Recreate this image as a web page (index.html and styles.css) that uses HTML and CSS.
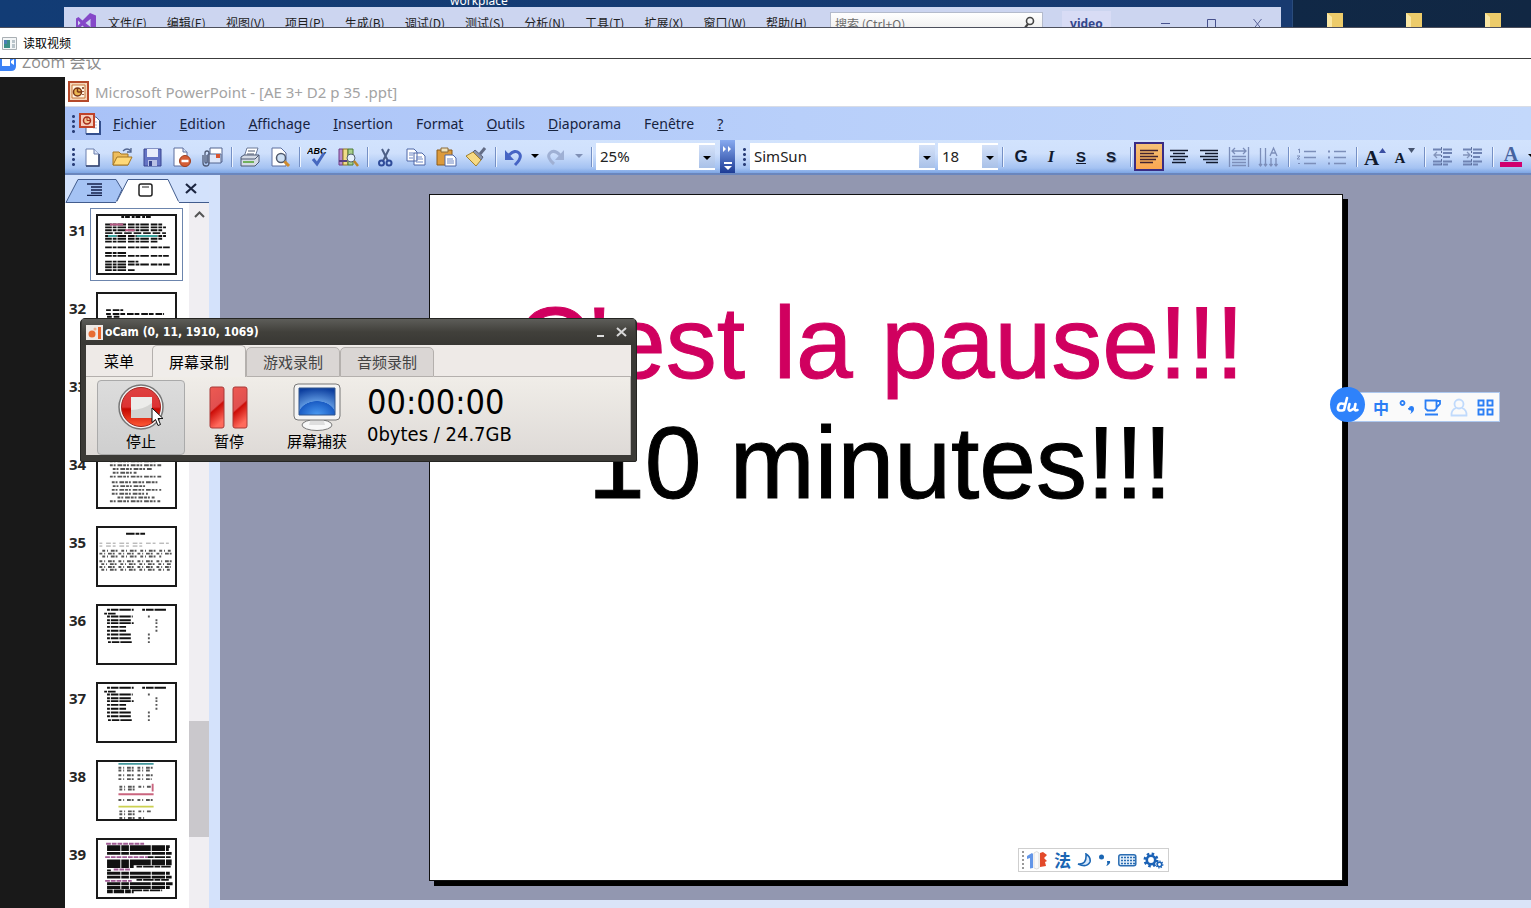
FILE: index.html
```html
<!DOCTYPE html>
<html lang="zh-CN">
<head>
<meta charset="utf-8">
<title>读取视频</title>
<link rel="stylesheet" href="styles.css">
</head>
<body>
<div class="screen">
  <header class="desktop">
    <span class="desktop-label">workplace</span>
    <div class="vs">
      <svg class="vs-logo" width="20" height="20" viewBox="0 0 20 20"><path fill="#8548c8" fill-rule="evenodd" d="M14 0l6 2.500v15L14 20 6.500 12.500 2.500 16 0 14.500v-9L2.500 4l4 3.500zM14.500 6L9.500 10l5 4zM2 7.500v5L4.500 10z"/></svg>
      <nav class="vs-menu">
        <a href="#">文件(F)</a><a href="#">编辑(E)</a><a href="#">视图(V)</a><a href="#">项目(P)</a><a href="#">生成(B)</a><a href="#">调试(D)</a><a href="#">测试(S)</a><a href="#">分析(N)</a><a href="#">工具(T)</a><a href="#">扩展(X)</a><a href="#">窗口(W)</a><a href="#">帮助(H)</a>
      </nav>
      <div class="vs-search">
        <input type="text" placeholder="搜索 (Ctrl+Q)" aria-label="搜索">
        <svg width="12" height="14" viewBox="0 0 12 14"><circle cx="7" cy="5" r="3.500" fill="none" stroke="#444" stroke-width="1.600"/><path d="M5 8L1 13" stroke="#444" stroke-width="2.200"/></svg>
      </div>
      <span class="vs-project">video</span>
      <div class="vs-controls">
        <button aria-label="最小化"><svg width="12" height="12"><path d="M1 5.500h9" stroke="#46508c"/></svg></button>
        <button aria-label="最大化"><svg width="12" height="12"><path d="M1.500 1.500h8v9h-8z" fill="none" stroke="#46508c"/></svg></button>
        <button aria-label="关闭"><svg width="12" height="12"><path d="M1.500 1l8 10M9.500 1l-8 10" stroke="#5b6499"/></svg></button>
      </div>
    </div>
    <div class="folders">
      <svg width="16" height="16"><path fill="#eccb6a" d="M0 0h16v16H0z"/><path fill="#fae7a4" d="M0 0l5 4v12H0z"/></svg>
      <svg width="16" height="16"><path fill="#eccb6a" d="M0 0h16v16H0z"/><path fill="#fae7a4" d="M0 0l5 4v12H0z"/></svg>
      <svg width="16" height="16"><path fill="#eccb6a" d="M0 0h16v16H0z"/><path fill="#fae7a4" d="M0 0l5 4v12H0z"/></svg>
    </div>
  </header>

  <div class="reader-title">
    <svg width="15" height="13" viewBox="0 0 15 13"><path fill="#f4f6f7" stroke="#a9afb3" d="M.5.5h14v12H.5z"/><path fill="#3b8f86" d="M2 3h6v8H2z"/><path fill="#4a7fb4" d="M2 3h3v4H2z"/><path fill="#b9c4ca" d="M10 3h3v3h-3zM10 7h3v4h-3z"/></svg>
    <span>读取视频</span>
  </div>

  <div class="zoom-title">
    <svg width="16" height="12" viewBox="0 0 16 12"><path fill="#3b82f6" d="M0 0h16v7q0 5-5 5H0z"/><path fill="#fff" d="M2 0h8v7H2zM11 2l3-2v6l-3-2z"/></svg>
    <span>Zoom 会议</span>
  </div>

  <main class="meeting">
    <div class="meeting-side"></div>
    <section class="ppt">
      <div class="ppt-title">
        <svg width="21" height="21" viewBox="0 0 21 21"><path fill="#f5d6b8" stroke="#b4492a" stroke-width="2" d="M1 1h19v19H1z"/><path fill="#fff4df" stroke="#c8763c" d="M4 4h13v13H4z"/><circle cx="9.500" cy="11" r="4" fill="#e9b650" stroke="#7b3518" stroke-width="1.500"/><path d="M9.500 11V7m0 4h4M15 6v2m0 2v1m0 2v1" stroke="#7b3518" stroke-width="1.500"/></svg>
        <span>Microsoft PowerPoint - [AE 3+ D2 p 35 .ppt]</span>
      </div>
      <nav class="ppt-menu">
        <span class="grip"></span>
        <svg class="doc-icon" width="25" height="22" viewBox="0 0 25 22"><path fill="#fff" stroke="#4c6395" d="M9 4h10l4 4v13H9z"/><path d="M23 8v13H9" fill="none" stroke="#344f8d" stroke-width="2"/><path d="M16 9h4m-4 3h4m-4 3h4" stroke="#a9b6d8"/><path fill="#f6cdbc" stroke="#bf432a" stroke-width="2" d="M3 1h14v13H3z"/><circle cx="10" cy="7.500" r="3.500" fill="#f3c796" stroke="#a82f1d" stroke-width="1.500"/><path d="M10 7.500V4m0 3.500h4" stroke="#a82f1d"/></svg>
        <a href="#"><u>F</u>ichier</a><a href="#"><u>E</u>dition</a><a href="#"><u>A</u>ffichage</a><a href="#"><u>I</u>nsertion</a><a href="#">Forma<u>t</u></a><a href="#"><u>O</u>utils</a><a href="#"><u>D</u>iaporama</a><a href="#">Fe<u>n</u>être</a><a href="#"><u>?</u></a>
      </nav>
      <div class="toolbar">
        <span class="grip"></span>
        <button aria-label="Nouveau"><svg width="22" height="22" viewBox="0 0 22 22"><path fill="#fff" stroke="#6b7fae" d="M5 3h8l5 5v12H5z"/><path d="M18 8v12H5" fill="none" stroke="#34446f" stroke-width="1.500"/><path d="M13 3v5h5" fill="#dbe4f8" stroke="#6b7fae"/></svg></button>
        <button aria-label="Ouvrir"><svg width="22" height="22" viewBox="0 0 22 22"><path fill="#eebd5c" stroke="#a47624" d="M2 19V6h6l2 2h7v11z"/><path fill="#ffd978" stroke="#a47624" d="M2 19l4-8h15l-4 8z"/><path d="M12 5q4-4 8 0m0-3v4h-4" fill="none" stroke="#52658f" stroke-width="1.300"/></svg></button>
        <button aria-label="Enregistrer"><svg width="22" height="22" viewBox="0 0 22 22"><path fill="#6574c4" stroke="#38458f" d="M3 3h17v17H3z"/><path fill="#e9edfb" d="M6 3h11v8H6z"/><path fill="#b9c2e6" d="M7 14h9v6H7z"/><path fill="#38458f" d="M8 15h3v5H8z"/></svg></button>
        <button aria-label="Autorisation"><svg width="22" height="22" viewBox="0 0 22 22"><path fill="#fff" stroke="#5c6f9e" d="M3 2h9l4 4v14H3z"/><path fill="#dce6fa" stroke="#5c6f9e" d="M12 2v4h4"/><circle cx="14" cy="15" r="5.500" fill="#d55e36" stroke="#a03d1c"/><path d="M10.500 15h7" stroke="#fff" stroke-width="2.500"/></svg></button>
        <button aria-label="Courrier"><svg width="22" height="22" viewBox="0 0 22 22"><path fill="#fff" stroke="#53658f" d="M9 2h12v14H9z"/><path fill="#dce6fa" stroke="#53658f" d="M7 8h13v9H7z"/><path fill="#d9542f" d="M15 8h4v4h-4z"/><path d="M2 9v8q0 3 3 3t3-3V7q0-2-2-2T4 7v9q0 1 1 1t1-1V9" fill="none" stroke="#4f5a74" stroke-width="1.300"/></svg></button>
        <span class="sep"></span>
        <button aria-label="Imprimer"><svg width="22" height="22" viewBox="0 0 22 22"><path fill="#fff" stroke="#6d7b98" d="M8 2h11l-3 9H5z"/><path fill="#d5dbe6" stroke="#4c5873" d="M2 11l3-2h15v7l-4 4H2z"/><path fill="#71b05c" d="M4 15h11v2H4z"/><path d="M9 5h7m-8 3h7M2 13h14l4-4" fill="none" stroke="#4c5873"/></svg></button>
        <button aria-label="Aperçu"><svg width="22" height="22" viewBox="0 0 22 22"><path fill="#fff" stroke="#5c6f9e" d="M3 2h9l5 5v13H3z"/><circle cx="12" cy="12" r="4.500" fill="#cfe1f5" stroke="#515a6c" stroke-width="1.500"/><path d="M15.500 15.500L20 20" stroke="#d08b2c" stroke-width="3"/></svg></button>
        <span class="sep"></span>
        <button aria-label="Orthographe"><svg width="22" height="22" viewBox="0 0 22 22"><text x="0" y="8" class="abc">ABC</text><path d="M6 13l4 5 7-11" fill="none" stroke="#4668bf" stroke-width="3"/></svg></button>
        <button aria-label="Recherche"><svg width="22" height="22" viewBox="0 0 22 22"><path fill="#b98acb" stroke="#6f3b85" d="M2 3h4v16H2z"/><path fill="#f0dc8a" stroke="#8d7625" d="M6 3h5v16H6z"/><path fill="#a9cf8d" stroke="#4c7a35" d="M11 3h5v16h-5z"/><circle cx="14" cy="12" r="4" fill="#e6f0fb" stroke="#55606e"/><path d="M17 15l4 5" stroke="#bd8524" stroke-width="2.500"/><path d="M2 15h8" stroke="#57407f" stroke-width="2"/></svg></button>
        <span class="sep"></span>
        <button aria-label="Couper"><svg width="22" height="22" viewBox="0 0 22 22"><path d="M7 3l6 12M14 3L8 15" stroke="#4c5f86" stroke-width="2"/><circle cx="6.500" cy="17" r="2.500" fill="none" stroke="#2f4c9a" stroke-width="2"/><circle cx="14" cy="17" r="2.500" fill="none" stroke="#2f4c9a" stroke-width="2"/></svg></button>
        <button aria-label="Copier"><svg width="22" height="22" viewBox="0 0 22 22"><path fill="#fff" stroke="#4e67a6" d="M2 3h7l3 3v9H2zM9 7h8l3 3v9H9z"/><path d="M4 7h5M4 9h4m-4 3h4m3-1h6m-6 2h7m-7 3h7" stroke="#6d86c4"/></svg></button>
        <button aria-label="Coller"><svg width="22" height="22" viewBox="0 0 22 22"><path fill="#dc9a3b" stroke="#8b5a18" d="M2 4h15v15H2z"/><path fill="#f1e3bb" stroke="#8b6a38" d="M6 2h7v4H6z"/><path fill="#fff" stroke="#4e67a6" d="M10 9h8l3 3v8H10z"/><path d="M12 13h6m-6 2h7m-7 2h7" stroke="#6d86c4"/></svg></button>
        <button aria-label="Reproduire"><svg width="22" height="22" viewBox="0 0 22 22"><path d="M20 2l-5 6" stroke="#626b84" stroke-width="3"/><path fill="#8b93a8" stroke="#59617a" d="M10 4l8 7-2 3-8-8z"/><path fill="#f6d983" stroke="#a1802e" d="M8 6l8 8-5 6L1 10z"/></svg></button>
        <span class="sep"></span>
        <button aria-label="Annuler"><svg width="22" height="22" viewBox="0 0 22 22"><path d="M6 9q6-6 10-2t-4 12" fill="none" stroke="#4664c4" stroke-width="3"/><path fill="#4664c4" d="M2 4v10h9z"/></svg></button>
        <button class="narrow" aria-label="Liste annuler"><svg width="8" height="5"><path d="M0 0h8L4 4z"/></svg></button>
        <button aria-label="Rétablir"><svg width="22" height="22" viewBox="0 0 22 22"><path d="M15 9Q9 3 5 7t4 11" fill="none" stroke="#9fb0d4" stroke-width="3"/><path fill="#9fb0d4" d="M19 4v10h-9z"/></svg></button>
        <button class="medium" aria-label="Liste rétablir"><svg width="8" height="5"><path fill="#8090b5" d="M0 0h8L4 4z"/></svg></button>
        <span class="sep"></span>
        <label class="combo combo-zoom"><select aria-label="Zoom"><option>25%</option></select><i></i></label>
        <button class="overflow" aria-label="Options"><svg width="15" height="31" viewBox="0 0 15 31"><path fill="#fff" d="M3 5l3 3-3 3zM8 5l3 3-3 3zM4 21h8v2H4zM4 25h8l-4 4z"/></svg></button>
        <span class="grip"></span>
        <label class="combo combo-font"><select aria-label="Police"><option>SimSun</option></select><i></i></label>
        <label class="combo combo-size"><select aria-label="Taille"><option>18</option></select><i></i></label>
        <span class="sep"></span>
        <button class="glyph">G</button>
        <button class="glyph italic">I</button>
        <button class="glyph under">S</button>
        <button class="glyph shade">S</button>
        <span class="sep"></span>
        <button class="active" aria-label="Aligner à gauche"><svg width="20" height="16"><path d="M1 1.500h18M1 4.500h14M1 7.500h18M1 10.500h16M1 13.500h13" stroke="#432330" stroke-width="1.500"/></svg></button>
        <button aria-label="Centrer"><svg width="20" height="16"><path d="M1 1.500h18M4 4.500h12M1 7.500h18M4 10.500h12M3 13.500h14" stroke="#111a2e" stroke-width="1.500"/></svg></button>
        <button aria-label="Aligner à droite"><svg width="20" height="16"><path d="M1 1.500h18M6 4.500h13M1 7.500h18M4 10.500h15M7 13.500h12" stroke="#111a2e" stroke-width="1.500"/></svg></button>
        <button aria-label="Distribuer"><svg width="22" height="22"><path d="M1.500 1v20M20.500 1v20M4 5h14M7 2L4 5l3 3M15 2l3 3-3 3M4 10.500h14M4 13.500h14M4 16.500h14M4 19.500h14" fill="none" stroke="#7c8eb9" stroke-width="1.300"/></svg></button>
        <button aria-label="Orientation"><svg width="22" height="22"><path d="M2.500 2v18M7.500 2v18M13 12v8M18 12v8M1 18l1.500 2L4 18M6 18l1.500 2L9 18M11.500 18l1.500 2 1.500-2M16.500 18l1.500 2 1.500-2M12 10l3.500-8L19 10M13 7h5" fill="none" stroke="#7c8eb9" stroke-width="1.300"/></svg></button>
        <span class="sep"></span>
        <button aria-label="Numérotation"><svg width="22" height="20"><path d="M8 4.500h12M8 10.500h12M8 16.500h12" stroke="#7c8eb9" stroke-width="1.500"/><path d="M2 3l1.500-1v4M1 9h3l-3 3h3M2 16.500h2" fill="none" stroke="#7c8eb9"/></svg></button>
        <button aria-label="Puces"><svg width="22" height="20"><path d="M8 4.500h12M8 10.500h12M8 16.500h12" stroke="#7c8eb9" stroke-width="1.500"/><path d="M2 3.500h2v2H2zM2 9.500h2v2H2zM2 15.500h2v2H2z" fill="#7c8eb9"/></svg></button>
        <span class="sep"></span>
        <button class="grow" aria-label="Augmenter">A<svg width="7" height="5"><path fill="#3b4fa2" d="M0 5h7L3.500 0z"/></svg></button>
        <button class="grow small" aria-label="Réduire">A<svg width="7" height="5"><path fill="#46546f" d="M0 0h7L3.500 5z"/></svg></button>
        <span class="sep"></span>
        <button aria-label="Diminuer le retrait"><svg width="22" height="20"><path d="M1 2.500h20M11 6h10M11 10h7M1 14.500h20M1 17.500h15" stroke="#6f83b3" stroke-width="2" stroke-dasharray="9 1"/><path d="M9 8H2m3-3L2 8l3 3" fill="none" stroke="#8394bb" stroke-width="1.300"/><path d="M9.500 0v20" stroke="#5c6e9b" stroke-dasharray="2 2"/></svg></button>
        <button aria-label="Augmenter le retrait"><svg width="22" height="20"><path d="M1 2.500h20M11 6h10M11 10h7M1 14.500h20M1 17.500h15" stroke="#6f83b3" stroke-width="2" stroke-dasharray="9 1"/><path d="M1 8h7M5 5l3 3-3 3" fill="none" stroke="#8394bb" stroke-width="1.300"/><path d="M9.500 0v20" stroke="#5c6e9b" stroke-dasharray="2 2"/></svg></button>
        <span class="sep"></span>
        <button class="font-color" aria-label="Couleur de police">A</button>
        <button class="narrow" aria-label="Liste couleurs"><svg width="8" height="5"><path d="M0 0h8L4 4z"/></svg></button>
      </div>

      <div class="work">
        <aside class="outline">
          <div class="tabs">
            <svg class="tab-shapes" width="144" height="28" viewBox="0 0 144 28"><path fill="#d3e2fc" d="M0 0h144v28H0z"/><path fill="#a5c3f4" stroke="#425c8d" d="M1 27.500L13 4.500h38l6 10-6 13z"/><path fill="#fff" stroke="#425c8d" d="M51 28L63 4.500h40L114 27.500h30"/><path d="M51 27.500h63" stroke="#fff" stroke-width="2"/></svg>
            <button class="tab-plan" aria-label="Plan"><svg width="16" height="13"><path d="M0 1h15M4 4h11M4 7h11M4 10h11M0 12.500h15" stroke="#15204a" stroke-width="1.500"/></svg></button>
            <button class="tab-slides" aria-label="Diapositives"><svg width="15" height="14"><rect x="1" y="1" width="13" height="12" rx="2" fill="none" stroke="#222" stroke-width="1.500"/><path d="M4 4h7" stroke="#222"/></svg></button>
            <button class="tab-close" aria-label="Fermer"><svg width="12" height="11"><path d="M1 1l10 9M11 1L1 10" stroke="#1c2641" stroke-width="2.200"/></svg></button>
          </div>
          <div class="slides">
            <ol class="thumbs">
              <li class="current"><b>31</b><svg viewBox="0 0 80 60"><path class="k" d="M24 1h32" stroke-dasharray="3 1 5 2"/><path class="k" d="M7 9h60M7 12h64M7 15h60M7 21h64M7 24h60M7 27h56M7 33h68M7 39h22M7 42h67M7 48h35M7 51h68M7 54h24M7 57h32" stroke-dasharray="7 1 4 1 9 2"/><path d="M12 9h14M28 15h10M50 54" stroke="#b65783" stroke-width="2"/><path d="M7 18h64" stroke="#222" stroke-width="2" stroke-dasharray="8 2"/><path d="M40 21h22M10 21h9" stroke="#3ea5a0" stroke-width="2"/></svg></li>
              <li><b>32</b><svg viewBox="0 0 80 60"><path class="k" d="M8 17h18M8 21h61M9 24h13" stroke-dasharray="5 2 7 1"/></svg></li>
              <li><b>33</b><svg viewBox="0 0 80 60"><path class="g" d="M10 15h50M10 25h54"/></svg></li>
              <li><b>34</b><svg viewBox="0 0 80 60"><path class="g" d="M12 12h50M12 16h54M15 20h42M15 24h25M12 28h54M14 34h50M15 38h34M14 42h52M14 46h38M20 50h39M12 54h53"/></svg></li>
              <li><b>35</b><svg viewBox="0 0 80 60"><path class="k" d="M29 6h20" stroke-dasharray="9 1 4 1"/><path class="l" d="M1 16h76M1 19h45"/><path class="g sparse" d="M4 24h72M1 27h78M4 30h62M1 35h78M3 38h74M1 41h75M3 44h72"/></svg></li>
              <li><b>36</b><svg viewBox="0 0 80 60"><path class="k" d="M9 4h28M46 4h25M6 8h12M9 11h27M9 15h25M9 18h28M9 22h20M9 26h20M9 30h25M9 34h25M10 38h26" stroke-dasharray="3 1 8 1 12 1"/><path class="g" d="M52 11h2M60 15h2M60 18h2M60 22h2M60 26h2M52 30h2M52 34h2M52 38h2"/></svg></li>
              <li><b>37</b><svg viewBox="0 0 80 60"><path class="k" d="M9 4h28M46 4h25M6 8h12M9 11h27M9 15h25M9 18h28M9 22h20M9 26h20M9 30h25M9 34h25M10 38h26" stroke-dasharray="3 1 8 1 12 1"/><path class="g" d="M52 11h2M60 15h2M60 18h2M60 22h2M60 26h2M52 30h2M52 34h2M52 38h2"/></svg></li>
              <li><b>38</b><svg viewBox="0 0 80 60"><path d="M21 2h37" stroke="#43989d" stroke-width="2"/><path class="g sparse" d="M21 6h36M21 9h34M21 14h36M21 18h35M22 26h34M22 29h20M21 40h36M22 52h34M22 55h16M22 59h26"/><path d="M21 34h37M57 23v8" stroke="#ca657f" stroke-width="2"/><path d="M21 47h37" stroke="#cbd04f" stroke-width="2"/></svg></li>
              <li><b>39</b><svg viewBox="0 0 80 60"><path d="M8 4h40M7 18h45M16 31h17M7 43h28" stroke="#a05b94" stroke-width="2" stroke-dasharray="5 1"/><path class="k w" d="M9 7h66M9 10h65M9 14h68M9 22h68M9 25h68M9 28h28M9 35h66M9 39h68M9 46h69M9 50h66"/><path class="k" d="M52 18h24M9 32h4M40 28h36M40 42h34M9 53h58M9 55h28" stroke-dasharray="6 1 11 1"/></svg></li>
            </ol>
            <div class="scroll">
              <svg width="11" height="7"><path d="M1 6l4.500-4.500L10 6" fill="none" stroke="#555" stroke-width="2"/></svg>
              <div class="scroll-thumb"></div>
            </div>
          </div>
        </aside>
        <div class="splitter"></div>
        <div class="stage">
          <article class="slide">
            <h1>C'est la pause!!!</h1>
            <p>10 minutes!!!</p>
          </article>
        </div>
      </div>
    </section>
  </main>

  <section class="ocam" aria-label="oCam">
    <div class="ocam-title">
      <svg width="17" height="15" viewBox="0 0 17 15"><path fill="#eee8e4" d="M0 0h17v15H0z"/><circle cx="6" cy="9" r="3.500" fill="#e76c33"/><circle cx="9" cy="4" r="1.500" fill="#e9ad8c"/><path fill="#e9642a" d="M12 2h3v12h-3z"/></svg>
      <span>oCam (0, 11, 1910, 1069)</span>
      <button aria-label="最小化"><svg width="10" height="12"><path d="M1 10h7" stroke="#ddd" stroke-width="2"/></svg></button>
      <button aria-label="关闭"><svg width="11" height="12"><path d="M1 2l9 8M10 2l-9 8" stroke="#d8d8d8" stroke-width="2"/></svg></button>
    </div>
    <div class="ocam-body">
      <div class="ocam-tabs">
        <button class="menu">菜单</button><button class="on">屏幕录制</button><button>游戏录制</button><button>音频录制</button><span></span>
      </div>
      <div class="ocam-tools">
        <button class="pressed"><svg width="48" height="48" viewBox="0 0 48 48"><defs><linearGradient id="red" x2="0" y2="1"><stop offset="0" stop-color="#de4141"/><stop offset=".5" stop-color="#d33"/><stop offset=".55" stop-color="#c60800"/><stop offset="1" stop-color="#ff5a35"/></linearGradient><linearGradient id="bar" x2=".3" y2="1"><stop offset="0" stop-color="#ee5a52"/><stop offset=".55" stop-color="#e05050"/><stop offset=".6" stop-color="#cc0d08"/><stop offset="1" stop-color="#ff6a5c"/></linearGradient><radialGradient id="blue" cx=".5" cy="1" r="1"><stop offset="0" stop-color="#4b9bf2"/><stop offset=".5" stop-color="#1a5cc4"/><stop offset=".52" stop-color="#5c95de"/><stop offset="1" stop-color="#0d3f9f"/></radialGradient></defs><circle cx="24" cy="24" r="22" fill="#f5f5f5" stroke="#777" stroke-width="1.500"/><circle cx="24" cy="24" r="19.500" fill="url(#red)" stroke="#a42620"/><path fill="#ececea" d="M14 14h21v21H14z"/><path fill="#c9c9c6" d="M14 27q12 0 21-7v15H14z" opacity=".7"/></svg>停止</button>
        <button><svg width="48" height="48" viewBox="0 0 48 48"><rect x="5" y="4" width="14" height="41" rx="2" fill="url(#bar)" stroke="#a83a38"/><rect x="28" y="4" width="14" height="41" rx="2" fill="url(#bar)" stroke="#a83a38"/></svg>暂停</button>
        <button><svg width="48" height="48" viewBox="0 0 48 48"><ellipse cx="24" cy="42" rx="15" ry="5.500" fill="#f8f8f8" stroke="#777"/><path fill="#dedede" d="M18 34h12l2 8H16z"/><rect x="1" y="1" width="46" height="36" rx="4" fill="#f4f4f4" stroke="#777"/><path fill="url(#blue)" stroke="#31558c" d="M6 5h36v27H6z"/></svg>屏幕捕获</button>
        <div class="ocam-status"><strong>00:00:00</strong><span>0bytes / 24.7GB</span></div>
      </div>
    </div>
    <svg class="cursor" width="13" height="20" viewBox="0 0 13 20"><path d="M1 1v14.500l3.500-3 2.500 6 2.500-1-2.500-6H12z" fill="#fff" stroke="#111"/></svg>
  </section>

  <div class="baidu">
    <span class="baidu-logo"><svg width="24" height="18" viewBox="0 0 24 18"><g fill="none" stroke="#fff" stroke-width="2.600" stroke-linecap="round" stroke-linejoin="round"><path d="M8 8Q3 6 2 11t6 3L11 2M13.500 8l-1 4q0 4 3 2l3-2 1-4-1 5q0 2 3 1"/></g></svg></span>
    <div class="baidu-bar">
      <button>中</button>
      <button aria-label="标点"><svg width="16" height="16"><circle cx="3.500" cy="4" r="2" fill="none" stroke="#2a7ef5" stroke-width="1.800"/><path d="M10 9q0-2 2.500-2T15 10q0 3-4 5 2-2 1-3.500-3 0-3-2.500z" fill="#2a7ef5"/></svg></button>
      <button aria-label="皮肤"><svg width="18" height="17"><path d="M1.500 1.500h11v8l-2 2h-7l-2-2zM13 2h3v3l-3 3M1 15.500h13" fill="none" stroke="#2a7ef5" stroke-width="1.800"/></svg></button>
      <button aria-label="账户"><svg width="18" height="19"><circle cx="9" cy="6" r="4.500" fill="none" stroke="#c0dafc" stroke-width="1.800"/><path d="M6 10q-5 2-4.500 7.500h15Q17 12 12 10" fill="none" stroke="#c0dafc" stroke-width="1.800"/></svg></button>
      <button aria-label="更多"><svg width="17" height="17"><path d="M1.500 1.500h5v5h-5zM10.500 1.500h5v5h-5zM1.500 10.500h5v5h-5zM10.500 10.500h5v5h-5z" fill="none" stroke="#2a7ef5" stroke-width="1.900"/></svg></button>
    </div>
  </div>

  <div class="ime">
    <span class="ime-grip"></span>
    <svg width="22" height="20" viewBox="0 0 22 20"><path fill="#6396e8" d="M1 6l5-3 1 1v14l-3 .5L4 8 1 9z"/><path fill="#fafafa" stroke="#ddd" d="M8 3q3-3 5 0v15q-2 2-5 0z"/><path fill="#e34a2b" d="M14 3l3-1 4 3-3 3 3 3-2 1 1 4-6 1z"/></svg>
    <button class="fa">法</button>
    <button aria-label="月亮"><svg width="15" height="15"><path d="M9 1q5 3 4 8-3 6-12 2 9 1 8-10z" fill="#d9e9fb" stroke="#1b66b3" stroke-width="1.600"/></svg></button>
    <button aria-label="标点"><svg width="14" height="14"><circle cx="3.500" cy="4" r="2.500" fill="#1b66b3"/><path d="M9 8h3q1 3-4 5 2-2 1-5z" fill="#1b66b3"/></svg></button>
    <button aria-label="键盘"><svg width="19" height="13"><rect x=".8" y=".8" width="17" height="11" rx="2" fill="#e3effa" stroke="#2a6db3" stroke-width="1.500"/><path d="M3 3.500h14M3 6.500h14M3 9.500h14" stroke="#2a6db3" stroke-width="1.500" stroke-dasharray="2 1"/></svg></button>
    <button aria-label="设置"><svg width="21" height="17"><circle cx="8" cy="8" r="6" fill="none" stroke="#1b62b6" stroke-width="3" stroke-dasharray="2.400 2.300"/><circle cx="8" cy="8" r="4.200" fill="none" stroke="#1b62b6" stroke-width="2.600"/><circle cx="16.500" cy="12.500" r="2.200" fill="none" stroke="#1b62b6" stroke-width="1.500"/><circle cx="16.500" cy="12.500" r="3.300" fill="none" stroke="#1b62b6" stroke-width="1.200" stroke-dasharray="1.300 1.200"/></svg></button>
  </div>
</div>
</body>
</html>
```

FILE: styles.css
```css
* { box-sizing: border-box; }
body { margin: 0; font-family: "Noto Sans", "Noto Sans CJK SC", sans-serif; }
button { padding: 0; border: 0; background: none; color: inherit; font: inherit; }
a { color: inherit; text-decoration: none; }
svg { display: block; flex: none; }

.screen { position: relative; display: flex; flex-direction: column; height: 100vh; overflow: hidden; background: #fff; }

/* desktop strip */
.desktop { position: relative; display: flex; flex: none; height: 28px; padding: 7px 0 0 64px; overflow: hidden; background: linear-gradient(90deg, #123c75, #183a70); border-bottom: 1px solid #4c4f5c; }
.desktop-label { position: absolute; left: 450px; top: 0; color: #fff; font-size: 12px; line-height: 2px; }
.vs { display: flex; flex: 1; align-items: flex-start; min-width: 0; overflow: hidden; background: #ccd5f0; color: #1e1e1e; font: 12px/32px "Noto Sans CJK SC", sans-serif; }
.vs-logo { margin: 6px 12px 0; }
.vs-menu { display: flex; flex: none; gap: 20px; white-space: nowrap; }
.vs-search { display: flex; align-items: flex-start; width: 213px; height: 24px; margin: 5px 0 0 23px; padding: 3px 7px 0 4px; background: linear-gradient(#fff, #e9e9e9); border: 1px solid #b4bbcc; }
.vs-search input { flex: 1; min-width: 0; height: 16px; padding: 0; border: 0; background: none; font: 12px/16px "Noto Sans CJK SC", sans-serif; }
.vs-search input::placeholder { color: #6d6d6d; }
.vs-project { width: 49px; height: 24px; margin: 4px 0 0 19px; background: #d8dcf5; color: #34478c; font: bold 12px/26px "Noto Sans", sans-serif; text-align: center; }
.vs-controls { display: flex; gap: 34px; margin: 11px 17px 0 auto; }
.folders { display: flex; flex: none; justify-content: space-between; width: 250px; height: 35px; margin: -7px 0 0 0; padding: 13px 30px 0 46px; background: linear-gradient(90deg, #183a70 11px, #2a4c7c 11px, #2a4c7c 12px, #102846 12px, #112743); }

/* window titles */
.reader-title { display: flex; flex: none; align-items: center; gap: 6px; height: 31px; padding-left: 2px; background: #fff; border-bottom: 1px solid #3c3c3c; color: #000; font: 12px/28px "Noto Sans CJK SC", sans-serif; }
.zoom-title { display: flex; flex: none; gap: 6px; height: 18px; overflow: hidden; color: #8d8d8d; font: 16px/6px "Open Sans", "Noto Sans CJK SC", sans-serif; }

.meeting { display: flex; flex: 1; min-height: 0; }
.meeting-side { flex: none; width: 65px; background: #191919; }
.ppt { display: flex; flex: 1; flex-direction: column; min-width: 0; }
.ppt-title { display: flex; flex: none; align-items: center; gap: 6px; height: 30px; padding-left: 3px; color: #a3a3a3; font: 15px/30px "Noto Sans", sans-serif; border-bottom: 1px solid #d8dce6; }
.ppt-menu { display: flex; flex: none; align-items: center; gap: 23px; height: 33px; padding-left: 6px; background: linear-gradient(90deg, #a9c2f7, #b8cffa 50%, #c3d8fb); color: #17233f; font: 14px/33px "Noto Sans", sans-serif; }
.doc-icon { margin: 0 -12px 0 -26px; }
.grip { flex: none; width: 9px; height: 20px; background: radial-gradient(circle, #2b3f79 1px, transparent 2px) 0 0 / 5px 5px repeat-y; }

/* toolbar */
.toolbar { display: flex; flex: none; align-items: center; height: 35px; padding-left: 6px; overflow: hidden; background: linear-gradient(#d2e3fd, #cfe0fc 40%, #a4c2f2 85%, #7da5e3); border-bottom: 2px solid #6a86bd; color: #111a2e; }
.toolbar .grip { width: 6px; }
.toolbar button { display: flex; flex: none; align-items: center; justify-content: center; width: 30px; height: 29px; }
.toolbar .narrow { width: 12px; }
.toolbar .medium { width: 16px; }
.sep { flex: none; width: 1px; height: 20px; margin: 0 3px 0 4px; background: #7590c5; box-shadow: 1px 0 #edf4ff; }
.combo { display: flex; flex: none; align-items: center; height: 27px; background: #fff; }
.combo select { flex: 1; min-width: 0; padding: 0 4px; border: 0; background: none; color: #222; font: 15px/27px "Noto Sans", sans-serif; appearance: none; }
.combo i { width: 16px; height: 23px; background: linear-gradient(#d4e1f8, #a9c1e8); }
.combo i::after { content: ""; display: block; margin: 11px auto 0; width: 0; border: 4px solid transparent; border-top-color: #000; }
.combo-zoom { width: 119px; margin-left: 1px; }
.combo-font { width: 185px; margin: 0 3px 0 4px; }
.combo-size { width: 60px; }
.toolbar .overflow { width: 15px; height: 33px; margin: 0 7px 0 5px; background: linear-gradient(#87aaf0, #1d3c96); }
.toolbar .overflow + .grip { margin-right: -2px; }
.toolbar .glyph { font: bold 17px "Liberation Sans", sans-serif; }
.toolbar .italic { font-family: "Liberation Serif", serif; font-style: italic; }
.toolbar .under { text-decoration: underline; }
.toolbar .under, .toolbar .shade { font-size: 15px; }
.toolbar .shade { text-shadow: 1px 1px #8494b4; }
.toolbar .active { background: linear-gradient(#f6c277, #fba751); border: 2px solid #3a2c83; }
.toolbar .grow { align-items: flex-start; font: bold 21px/32px "Liberation Serif", serif; }
.toolbar .grow svg { margin-top: 6px; }
.toolbar .small { font-size: 15px; }
.toolbar .small svg { margin-left: 3px; }
.toolbar .font-color { width: 22px; height: 20px; margin: 0 4px; border-bottom: 5px solid #d0006f; color: #46639f; font: bold 20px/16px "Liberation Serif", serif; }
.abc { font: italic bold 9px "Liberation Sans", sans-serif; }

/* slide list */
.work { display: flex; flex: 1; min-height: 0; }
.outline { display: flex; flex: none; flex-direction: column; width: 144px; background: #fff; }
.tabs { position: relative; display: flex; flex: none; align-items: center; height: 28px; }
.tab-shapes { position: absolute; inset: 0; }
.tabs button { position: relative; display: flex; justify-content: center; width: 45px; }
.tab-plan { margin-left: 8px; }
.tabs .tab-slides { width: 58px; margin-top: 2px; }
.tabs .tab-close { width: 36px; margin-bottom: 2px; }
.slides { display: flex; flex: 1; min-height: 0; }
.thumbs { display: flex; flex: 1; flex-direction: column; gap: 17px; margin: 0; padding: 11px 0 0 4px; overflow: hidden; list-style: none; }
.thumbs li { display: flex; flex: none; gap: 7px; height: 61px; color: #262626; font: 15px/32px "Noto Sans", sans-serif; }
.thumbs b { width: 20px; }
.thumbs svg { width: 81px; height: 61px; background: #fff; border: 2px solid #1a1a1a; }
.thumbs .current svg { outline: 1px solid #6c85ad; outline-offset: 5px; }
.k { stroke: #111; stroke-width: 2; }
.w { stroke-width: 3; stroke-dasharray: 14 1 8 1 22 1; }
.g { stroke: #555; stroke-width: 2; stroke-dasharray: 3 1 2 2 5 1; }
.sparse { stroke-dasharray: 3 2 1 3 4 1 2 4; }
.l { stroke: #999; stroke-width: 1; stroke-dasharray: 3 4 5 2; }
.scroll { display: flex; flex: none; flex-direction: column; align-items: center; justify-content: space-between; width: 20px; padding: 8px 0 71px; background: #f0eef2; }
.scroll-thumb { width: 100%; height: 116px; background: #cac8cc; }
.splitter { flex: none; width: 11px; background: #d4e2fb; }
.stage { display: flex; flex: 1; min-width: 0; padding: 19px 188px 19px 209px; background: #9297b0; border-bottom: 8px solid #dae4f8; }
.slide { flex: 1; padding: 88px 12px 0 0; background: #fff; border: 1px solid #111; box-shadow: 5px 5px #000; color: #000; font: 102px/120px "Liberation Sans", sans-serif; text-align: center; white-space: nowrap; -webkit-text-stroke: 1px currentColor; }
.slide h1 { margin: 0; color: #d0005f; font: inherit; }
.slide p { margin: 0; }

/* recorder window */
.ocam { position: absolute; left: 80px; top: 318px; width: 557px; height: 144px; padding: 0 6px 6px; background: #3b3a36; border: 1px solid #252522; border-radius: 5px 5px 2px 2px; }
.ocam-title { display: flex; align-items: center; gap: 2px; height: 26px; margin: 0 -5px; padding: 0 8px 0 4px; background: linear-gradient(#5d5d59, #41403b 50%, #383733); color: #fff; font: bold 12px/26px "DejaVu Sans Condensed", "DejaVu Sans", sans-serif; }
.ocam-title span { flex: 1; }
.ocam-title button + button { margin-left: 8px; }
.ocam-body { display: flex; flex-direction: column; height: 110px; margin: 0 -1px; background: #eeeae7; font: 15px/30px "Noto Sans CJK SC", sans-serif; }
.ocam-tabs { display: flex; align-items: flex-end; height: 32px; }
.ocam-tabs button { width: 94px; height: 30px; background: #dad6d4; border: 1px solid #b4b0ad; border-radius: 5px 5px 0 0; color: #444; line-height: 26px; }
.ocam-tabs .menu { width: 66px; height: 32px; background: none; border-width: 0 0 1px; border-radius: 0; color: #000; }
.ocam-tabs .on { height: 32px; background: #f0edea; border-bottom: 0; color: #000; }
.ocam-tabs span { flex: 1; align-self: stretch; border-bottom: 1px solid #b4b0ad; }
.ocam-tools { display: flex; flex: 1; padding: 3px 0 0 11px; background: linear-gradient(#f0ede8, #dedad7); border-right: 1px solid #b4b0ad; }
.ocam-tools button { display: flex; flex-direction: column; align-items: center; width: 88px; padding-top: 3px; line-height: 20px; }
.ocam-tools .pressed { background: linear-gradient(#dcdcdc, #cfcfcf); border: 1px solid #aaa; border-radius: 4px; padding-top: 2px; }
.ocam-status { display: flex; flex-direction: column; margin-left: 6px; color: #000; font-family: "DejaVu Sans Condensed", "Noto Sans", sans-serif; }
.ocam-status strong { font-size: 34px; font-weight: normal; line-height: 44px; }
.ocam-status span { font-size: 20px; line-height: 20px; }
.cursor { position: absolute; left: 70px; top: 88px; }

/* input method bars */
.baidu { position: absolute; top: 387px; right: 31px; display: flex; align-items: center; }
.baidu-logo { position: relative; display: flex; align-items: center; justify-content: center; width: 35px; height: 35px; border-radius: 50%; background: #2e82fb; }
.baidu-bar { display: flex; align-items: center; height: 30px; margin: 5px 0 0 -18px; padding: 0 1px 0 20px; background: #fafafa; border: 1px solid #adc8ef; color: #2a7ef5; font: bold 16px/28px "Noto Sans CJK SC", sans-serif; }
.baidu-bar button { display: flex; justify-content: center; width: 26px; }
.ime { position: absolute; right: 362px; bottom: 36px; display: flex; align-items: center; gap: 6px; height: 24px; padding: 0 4px 0 3px; background: #fff; border: 1px solid #cfcfcf; color: #1b66b3; font: bold 17px/22px "Noto Sans CJK SC", sans-serif; }
.ime-grip { width: 2px; height: 18px; margin-right: -4px; background: repeating-linear-gradient(#999 0 2px, #fff 2px 4px); }
```
